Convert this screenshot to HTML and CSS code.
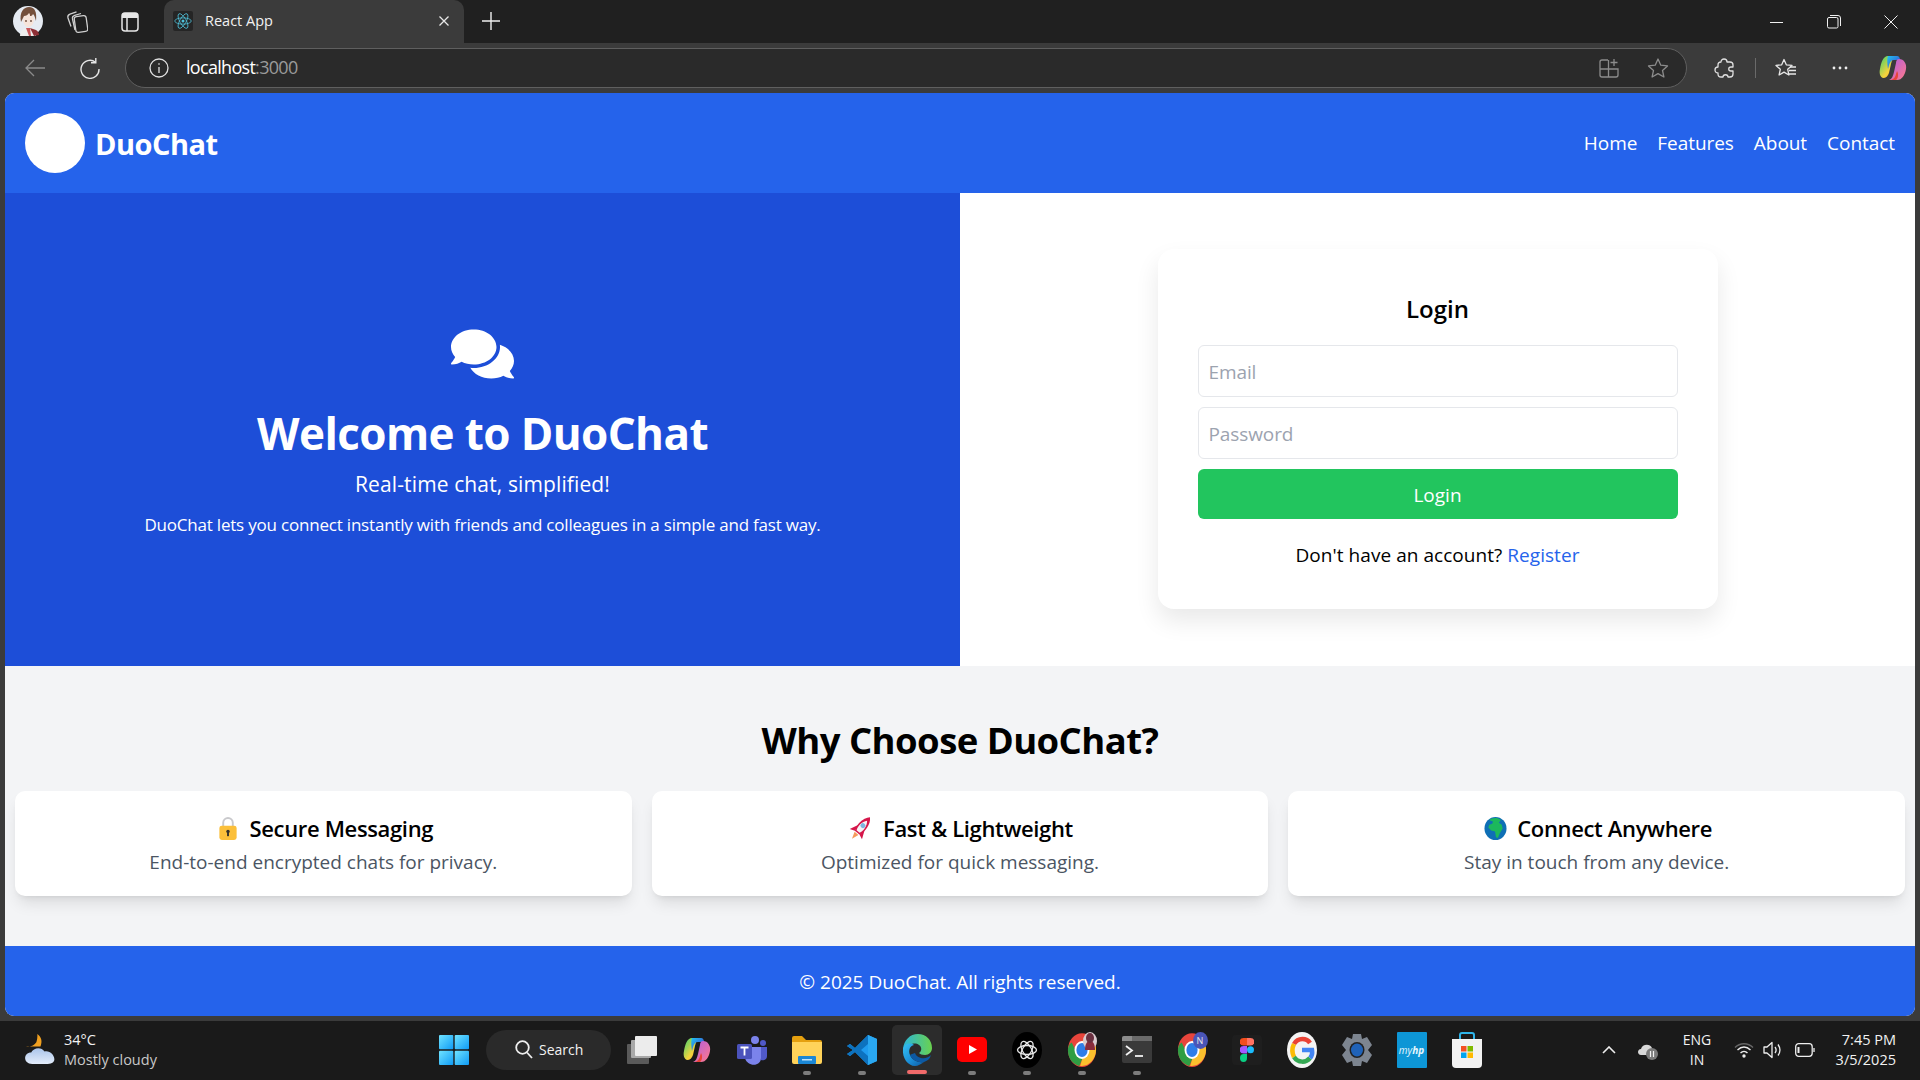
FILE: index.html
```html
<!DOCTYPE html>
<html>
	<head>
		<meta charset="utf-8" />
		<title>React App</title>
		<link rel="stylesheet" href="styles.css">
	</head>
	<body>
		<svg class="defs" width="0" height="0">
			<defs>
				<linearGradient id="copA" x1="0" y1="0" x2="1" y2="1"><stop offset="0" stop-color="#1fc4f0"/><stop offset=".5" stop-color="#2f7de0"/><stop offset="1" stop-color="#2a4fc0"/></linearGradient>
				<linearGradient id="copB" x1="0" y1="0" x2="1" y2="1"><stop offset="0" stop-color="#b05ce0"/><stop offset="1" stop-color="#ff7a8a"/></linearGradient>
				<linearGradient id="copC" x1="0" y1="0" x2="1" y2="1"><stop offset="0" stop-color="#3cd070"/><stop offset=".6" stop-color="#f5d33c"/><stop offset="1" stop-color="#f59a30"/></linearGradient>
				<linearGradient id="winG" x1="0" y1="0" x2="1" y2="1"><stop offset="0" stop-color="#6fe3ff"/><stop offset="1" stop-color="#0f9bf5"/></linearGradient>
				<linearGradient id="edgeG" x1="0" y1="0" x2="1" y2="1"><stop offset="0" stop-color="#35c1f1"/><stop offset=".55" stop-color="#1b8fd8"/><stop offset="1" stop-color="#0c59a4"/></linearGradient>
				<linearGradient id="edgeH" x1="0" y1="0" x2="1" y2="0"><stop offset="0" stop-color="#2bb5d8"/><stop offset="1" stop-color="#6ad24e"/></linearGradient>
				<linearGradient id="cloudG" x1="0" y1="0" x2="0" y2="1"><stop offset="0" stop-color="#aac4ea"/><stop offset="1" stop-color="#e3ecfa"/></linearGradient>
				<symbol id="copilot" viewBox="0 0 28 26">
					<path d="M9 1h8c-3 1-4 4-5 8l-2 9c-1 3-3 5-6 5-3-1-4-5-3-9 1-6 3-13 8-13z" fill="url(#copC)"/>
					<path d="M9 1h9c2 0 3 2 3 4h-6c-3 0-4 2-5 5l-1 4c-1-6-1-11 0-13z" fill="url(#copA)"/>
					<path d="M20 4c5 0 8 5 7 10-1 6-4 11-9 11h-8c3-1 4-4 5-8l2-9c0-2 1-4 3-4z" fill="url(#copB)"/>
					<path d="M10 25c4 0 6-2 7-6l1-3c2 3 1 8-1 9z" fill="#e8443a"/>
				</symbol>
				<symbol id="chrome" viewBox="0 0 32 36">
					<ellipse cx="16" cy="18" rx="15" ry="18" fill="#e8453c"/>
					<path d="M1 18c0 9 5 15 12 17l6-13-10-4-4-8c-3 2-4 5-4 8z" fill="#2f9e44"/>
					<path d="M31 18c0-4-1-7-3-10H16l4 7-6 20h2c8 0 15-8 15-17z" fill="#fbc02d"/>
					<ellipse cx="16" cy="18" rx="8" ry="9.5" fill="#fff"/>
					<ellipse cx="16" cy="18" rx="6" ry="7.5" fill="#2f7de8"/>
				</symbol>
			</defs>
		</svg>

		<div class="tabbar">
			<span class="avatar">
				<svg width="30" height="30" viewBox="0 0 30 30"><circle cx="15" cy="15" r="15" fill="#e6ebf2"/><path d="M7 30c0-5 3-8 8-8s8 3 8 8z" fill="#eeeeee"/><path d="M17 22l6 2c2 1 3 3 3 5l-5 1z" fill="#8e2f35"/><path d="M13 22l3 8h2l-1-8z" fill="#c8565a"/><ellipse cx="15.500" cy="13.500" rx="5.500" ry="7.500" fill="#f6e4da"/><path d="M8 16C6 6 11 1 16 1c6 0 8 5 7 14-1-3-1-5-3-7-1 2-2 2-3 2 0-1 0-2-1-3-1 2-3 3-5 3-1 2-2 4-3 6z" fill="#74503c"/><circle cx="13" cy="15" r=".9" fill="#6a4a3a"/><circle cx="18" cy="15" r=".9" fill="#6a4a3a"/></svg>
			</span>
			<svg class="tb-icon collections" width="22" height="24" viewBox="0 0 22 24" fill="none" stroke="#d0d0d0" stroke-width="1.300"><rect x="9" y="6" width="12" height="16" rx="2.500" transform="rotate(-8 15 14)"/><path d="M9 20L6.500 9c-.4-2 .5-3.200 2.200-3.700L15 3.500"/><path d="M5 16.500L2 8c-.6-2 .3-3.200 2-3.800l6.500-2.400"/></svg>
			<svg class="tb-icon tablist" width="18" height="20" viewBox="0 0 18 20" fill="none"><rect x="1" y="1" width="16" height="18" rx="3" stroke="#e6e6e6" stroke-width="1.500"/><path d="M1 3a2 2 0 0 1 2-2h12a2 2 0 0 1 2 2v3H1z" fill="#e6e6e6"/><path d="M6 6v13" stroke="#e6e6e6" stroke-width="1.500"/></svg>
			<div class="tab">
				<span class="favicon">
					<svg width="18" height="18" viewBox="-12 -12 24 24" fill="none" stroke="#4fc3dc" stroke-width="1"><circle r="2" fill="#4fc3dc" stroke="none"/><ellipse rx="11" ry="4.200"/><ellipse rx="11" ry="4.200" transform="rotate(60)"/><ellipse rx="11" ry="4.200" transform="rotate(120)"/></svg>
				</span>
				<span class="tab-title">React App</span>
				<svg class="tab-close" width="12" height="12" viewBox="0 0 12 12" stroke="#e8e8e8" stroke-width="1.300"><path d="M1.500 1.500l9 9M10.500 1.500l-9 9"/></svg>
			</div>
			<svg class="new-tab" width="18" height="18" viewBox="0 0 18 18" stroke="#f0f0f0" stroke-width="1.400"><path d="M9 0v18M0 9h18"/></svg>
			<div class="win-btns">
				<svg width="14" height="14" viewBox="0 0 14 14" stroke="#f0f0f0" stroke-width="1"><path d="M0 7.500h13"/></svg>
				<svg width="14" height="14" viewBox="0 0 14 14" fill="none" stroke="#f0f0f0" stroke-width="1"><rect x=".5" y="2.500" width="10.500" height="10.500" rx="1.500"/><path d="M3 .5h8a2.500 2.500 0 0 1 2.500 2.500v8"/></svg>
				<svg width="14" height="14" viewBox="0 0 14 14" stroke="#f0f0f0" stroke-width="1"><path d="M.5.5l13 13M13.500.5l-13 13"/></svg>
			</div>
		</div>

		<div class="toolbar">
			<svg class="back" width="20" height="18" viewBox="0 0 20 18" fill="none" stroke="#8a8a8a" stroke-width="1.300"><path d="M20 9H1M9 1L1 9l8 8"/></svg>
			<svg class="reload" width="20" height="21" viewBox="0 0 20 21" fill="none" stroke="#e6e6e6" stroke-width="1.400"><path d="M15.500 4.200A9 9 0 1 0 19 11"/><path d="M15.800 0v4.800H11"/></svg>
			<div class="address">
				<svg width="20" height="20" viewBox="0 0 20 20" fill="none" stroke="#e0e0e0" stroke-width="1.300"><circle cx="10" cy="10" r="9"/><path d="M10 9v6M10 5.200v1.500"/></svg>
				<span class="url">localhost<span class="url-port">:3000</span></span>
				<span class="grow"></span>
				<svg class="addr-split" width="20" height="20" viewBox="0 0 20 20" fill="none" stroke="#8c8c8c" stroke-width="1.300"><path d="M9 2H3a2 2 0 0 0-2 2v13a2 2 0 0 0 2 2h14a2 2 0 0 0 2-2v-6H1M9.500 2v17M15 1v7M11.500 4.500h7"/></svg>
				<svg class="addr-star" width="22" height="20" viewBox="0 0 22 20" fill="none" stroke="#8c8c8c" stroke-width="1.300"><path d="M11 1l2.800 6.200 6.700.7-5 4.500 1.400 6.600L11 15.600 5.100 19l1.400-6.600-5-4.500 6.700-.7z" stroke-linejoin="round"/></svg>
			</div>
			<div class="tool-right">
				<svg class="t-ext" width="20" height="20" viewBox="0 0 20 20" fill="none" stroke="#e0e0e0" stroke-width="1.300"><path d="M7 4c0-4 6-4 6 0h3c2 0 3 1 3 3v2h-2c-3 0-3 4 0 4h2v3c0 2-1 3-3 3h-2c0-3-5-3-5 0H7c-2 0-3-1-3-3v-1c-4 0-4-6 0-6V7c0-2 1-3 3-3z" stroke-linejoin="round"/></svg>
				<span class="t-div"></span>
				<svg class="t-fav" width="22" height="20" viewBox="0 0 22 20" fill="none" stroke="#e6e6e6" stroke-width="1.300"><path d="M9 1.500l2.300 5.300 5.700.6-4.300 3.900 1.200 5.700L9 14.100 4.100 17l1.200-5.700L1 7.400l5.700-.6z" stroke-linejoin="round"/><path d="M15 9h6M14 12.500h7M13 16h8"/></svg>
				<svg class="t-more" width="16" height="4" viewBox="0 0 16 4" fill="#eee"><circle cx="2" cy="2" r="1.400"/><circle cx="8" cy="2" r="1.400"/><circle cx="14" cy="2" r="1.400"/></svg>
				<svg class="t-cop" width="28" height="26"><use href="#copilot"/></svg>
			</div>
		</div>

		<div class="page">
			<header class="site-head">
				<div class="brand">
					<span class="brand-logo"></span>
					<span class="brand-name">DuoChat</span>
				</div>
				<nav class="site-nav">
					<a>Home</a>
					<a>Features</a>
					<a>About</a>
					<a>Contact</a>
				</nav>
			</header>

			<section class="hero">
				<div class="hero-left">
					<svg class="hero-icon" width="63" height="56" viewBox="0 0 576 512" fill="#fff"><path d="M416 192c0-88.400-93.100-160-208-160S0 103.600 0 192c0 34.300 14.100 65.900 38 92-13.400 30.200-35.500 54.200-35.800 54.500-2.200 2.300-2.800 5.700-1.500 8.700S4.800 352 8 352c36.600 0 66.900-12.300 88.700-25 32.200 15.700 70.300 25 111.300 25 114.900 0 208-71.600 208-160zm122 220c23.900-26 38-57.700 38-92 0-66.900-53.500-124.200-129.300-148.100.9 6.600 1.300 13.300 1.300 20.100 0 105.900-107.700 192-240 192-10.800 0-21.300-.8-31.700-1.900C207.800 439.600 281.800 480 368 480c41 0 79.100-9.200 111.300-25 21.800 12.700 52.100 25 88.700 25 3.200 0 6.100-1.900 7.300-4.800 1.300-2.900.7-6.300-1.500-8.700-.3-.3-22.400-24.200-35.800-54.500z"/></svg>
					<h1 class="hero-title">Welcome to DuoChat</h1>
					<p class="hero-sub">Real-time chat, simplified!</p>
					<p class="hero-text">DuoChat lets you connect instantly with friends and colleagues in a simple and fast way.</p>
				</div>
				<div class="hero-right">
					<form class="login-card">
						<h2 class="login-title">Login</h2>
						<input class="login-input" type="text" placeholder="Email">
						<input class="login-input" type="password" placeholder="Password">
						<button class="login-btn" type="button">Login</button>
						<p class="login-note">Don't have an account? <a>Register</a></p>
					</form>
				</div>
			</section>

			<section class="features">
				<h2 class="features-title">Why Choose DuoChat?</h2>
				<div class="feature-grid">
					<div class="feature-card">
						<h3 class="feature-name">
							<span class="emoji"><svg width="18" height="23" viewBox="0 0 18 24"><path d="M4 11V6a5 5 0 0 1 10 0v5" fill="none" stroke="#c9c9cc" stroke-width="2"/><rect x="0" y="9" width="18" height="15" rx="2.500" fill="#fbbf3a"/><circle cx="9" cy="15" r="1.800" fill="#33302a"/><rect x="8" y="15" width="2" height="5" fill="#33302a"/></svg></span>
							Secure Messaging
						</h3>
						<p class="feature-text">End-to-end encrypted chats for privacy.</p>
					</div>
					<div class="feature-card">
						<h3 class="feature-name">
							<span class="emoji"><svg width="24" height="24" viewBox="0 0 24 24"><g transform="rotate(40 12 12)"><path d="M9.500 19h5L12 26z" fill="#f59a5c"/><path d="M8 11L4 20l5-2zM16 11l4 9-5-2z" fill="#d5164a"/><path d="M12-2c5.500 5 5.500 15 3 20H9C6.500 13 6.500 3 12-2z" fill="#d5164a"/><path d="M12 2.500c3.500 4 3.800 10.500 2 14h-4c-1.800-3.500-1.500-10 2-14z" fill="#f7f4f6"/><circle cx="12" cy="9" r="2.500" fill="#7fb4e0"/></g></svg></span>
							Fast &amp; Lightweight
						</h3>
						<p class="feature-text">Optimized for quick messaging.</p>
					</div>
					<div class="feature-card">
						<h3 class="feature-name">
							<span class="emoji"><svg width="23" height="23" viewBox="0 0 23 24"><ellipse cx="11.500" cy="12" rx="11.500" ry="12" fill="#0f6fb5"/><path d="M5 3c3-2 8-3 12 0l-2 3 3 2 1 4-3 5-2 5-2-1-1-6-4-1-3-3 1-3 3-1 1-2z" fill="#1cb85c"/></svg></span>
							Connect Anywhere
						</h3>
						<p class="feature-text">Stay in touch from any device.</p>
					</div>
				</div>
			</section>

			<footer class="site-foot">© 2025 DuoChat. All rights reserved.</footer>
		</div>

		<div class="taskbar">
			<div class="weather">
				<svg width="32" height="31" viewBox="0 0 31 30"><path d="M12 0c4 3 5 7 3 12L1 12c4 1 8-1 10-4 1-3 1-5 1-8z" fill="#f0a020"/><path d="M7 29c-9 0-9-11-1-11 2-5 10-6 13-1 8-2 15 12 3 12z" fill="url(#cloudG)"/></svg>
				<div class="weather-txt">
					<span class="w-temp">34°C</span>
					<span class="w-desc">Mostly cloudy</span>
				</div>
			</div>
			<svg class="start" width="30" height="30" viewBox="0 0 30 30" fill="url(#winG)"><rect width="14.300" height="14.300" rx="1"/><rect x="15.700" width="14.300" height="14.300" rx="1"/><rect y="15.700" width="14.300" height="14.300" rx="1"/><rect x="15.700" y="15.700" width="14.300" height="14.300" rx="1"/></svg>
			<div class="search-pill">
				<svg width="18" height="19" viewBox="0 0 18 19" fill="none" stroke="#eee" stroke-width="1.800"><circle cx="7.500" cy="7.500" r="6.300"/><path d="M12 12.500l5 5.500"/></svg>
				<span>Search</span>
			</div>
			<div class="tiles">
				<div class="tile"><svg width="30" height="28" viewBox="0 0 30 28"><rect y="8" width="22" height="20" rx="1" fill="#5a5a5a"/><rect x="4" y="4" width="20" height="18" rx="1" fill="#a8a8a8"/><rect x="8" y="0" width="22" height="20" rx="1" fill="#ececec"/></svg></div>
				<div class="tile"><svg width="28" height="26"><use href="#copilot"/></svg></div>
				<div class="tile"><svg width="30" height="30" viewBox="0 0 30 30"><circle cx="18" cy="5" r="4" fill="#7b83eb"/><circle cx="26" cy="8" r="3" fill="#5059c9"/><path d="M22 12h8v9c0 4-4 5-6 4z" fill="#5059c9"/><path d="M8 12h16v11c0 9-14 9-16 0z" fill="#7b83eb"/><rect y="9" width="15" height="15" rx="1.500" fill="#4b53bc"/><path d="M3.500 12.500h8M7.500 12.500v8" stroke="#fff" stroke-width="1.800"/></svg></div>
				<div class="tile has-dot"><svg width="30" height="28" viewBox="0 0 30 28"><path d="M0 2a2 2 0 0 1 2-2h8l4 4h14a2 2 0 0 1 2 2v4H0z" fill="#e5a00f"/><path d="M0 6h30v20a2 2 0 0 1-2 2H2a2 2 0 0 1-2-2z" fill="#ffd35a"/><rect x="6" y="20" width="18" height="8" rx="1" fill="#1b87d5"/><rect x="10" y="23" width="10" height="1.500" fill="#bfe2fb"/></svg></div>
				<div class="tile has-dot"><svg width="30" height="30" viewBox="0 0 30 30"><path d="M21 0l9 4v22l-9 4-13-13-5 4-3-2 6-4-6-4 3-2 5 4z" fill="#1f9cf0"/><path d="M21 0v9l-7 6 7 6v9l-13-13-5 4-3-2 6-4-6-4 3-2 5 4z" fill="#0d72bf"/><path d="M21 0l9 4v22l-9 4z" fill="#2aa8f2"/></svg></div>
				<div class="tile is-active has-bar"><svg width="30" height="32" viewBox="0 0 30 32"><path d="M1 15C2 6 8 0 16 0c8 0 14 6 14 14 0 4-3 7-7 7-3 0-5-1-6-2 3-2 3-6 0-8-4-3-10-1-11 4z" fill="url(#edgeH)"/><path d="M1 15c1-5 7-7 11-4-4 1-6 5-4 10 2 5 8 8 14 7-3 2-6 4-9 4-7 0-13-8-12-17z" fill="url(#edgeG)"/><path d="M8 21c2 5 8 8 14 7 3-1 6-3 7-7-2 2-6 4-10 3-3-1-5-2-6-5-2 1-4 1-5 2z" fill="#0c59a4"/></svg></div>
				<div class="tile has-dot"><svg width="30" height="25" viewBox="0 0 30 25"><rect width="30" height="25" rx="5" fill="#f00"/><path d="M12 8l8 4.500-8 4.500z" fill="#fff"/></svg></div>
				<div class="tile has-dot"><svg width="30" height="36" viewBox="0 0 30 36"><ellipse cx="15" cy="18" rx="15" ry="18" fill="#000"/><g fill="none" stroke="#e8e8e8" stroke-width="1.300"><ellipse cx="15" cy="18" rx="9.500" ry="4.500"/><ellipse cx="15" cy="18" rx="9.500" ry="4.500" transform="rotate(60 15 18)"/><ellipse cx="15" cy="18" rx="9.500" ry="4.500" transform="rotate(120 15 18)"/></g></svg></div>
				<div class="tile has-dot"><span class="tile-stack"><svg width="30" height="36"><use href="#chrome"/></svg><svg class="tile-over" width="14" height="18" viewBox="0 0 14 18"><ellipse cx="7" cy="9" rx="7" ry="9" fill="#d9ccd0"/><path d="M2 18c0-6 2-9 5-9s5 3 5 9z" fill="#8a2c3c"/><ellipse cx="7" cy="6" rx="4" ry="5" fill="#6a3040"/></svg></span></div>
				<div class="tile has-dot"><svg width="30" height="27" viewBox="0 0 30 27"><rect width="30" height="27" rx="2" fill="#3a3a3a"/><path d="M0 2a2 2 0 0 1 2-2h26a2 2 0 0 1 2 2v3H0z" fill="#8c8c8c"/><rect x="10" width="20" height="5" fill="#6a6a6a"/><path d="M4 10l6 4.500-6 4.500" fill="none" stroke="#f2f2f2" stroke-width="1.800"/><path d="M13 20h8" stroke="#f2f2f2" stroke-width="1.800"/></svg></div>
				<div class="tile"><span class="tile-stack"><svg width="30" height="36"><use href="#chrome"/></svg><span class="tile-n">N</span></span></div>
				<div class="tile"><span class="figma-box"><svg width="14" height="24" viewBox="0 0 14 24"><path d="M7 0H3.500a3.500 3.500 0 0 0 0 7.500H7z" fill="#f24e1e"/><path d="M7 0h3.500a3.500 3.500 0 0 1 0 7.500H7z" fill="#ff7262"/><path d="M7 8H3.500a3.500 3.500 0 0 0 0 7.500H7z" fill="#a259ff"/><circle cx="10.500" cy="11.750" r="3.500" fill="#1abcfe"/><path d="M3.500 16H7v4a3.500 4 0 1 1-3.500-4z" fill="#0acf83"/></svg></span></div>
				<div class="tile"><svg width="30" height="36" viewBox="0 0 30 36"><ellipse cx="15" cy="18" rx="15" ry="18" fill="#f4f4f4"/><g fill="none" stroke-width="4.500"><path d="M23 11C20 6 11 5 7 12" stroke="#ea4335"/><path d="M7 12c-2 4-2 9 0 13" stroke="#fbbc05"/><path d="M7 25c4 6 12 6 16 1" stroke="#34a853"/><path d="M23 26c2-2 2.500-5 2-8H15" stroke="#4285f4"/></g></svg></div>
				<div class="tile"><svg width="30" height="32" viewBox="0 0 30 32"><path d="M11 0h8l1 5 5-2 5 8-4 5 4 5-5 8-5-2-1 5h-8l-1-5-5 2-5-8 4-5-4-5 5-8 5 2z" fill="#7d8590"/><ellipse cx="15" cy="16" rx="7.500" ry="8" fill="#222"/><ellipse cx="15" cy="16" rx="6" ry="6.500" fill="#1f62b8"/></svg></div>
				<div class="tile"><span class="myhp">my<b>hp</b></span></div>
				<div class="tile"><svg width="30" height="36" viewBox="0 0 30 36"><path d="M8 7V3a2 2 0 0 1 2-2h10a2 2 0 0 1 2 2v4" fill="none" stroke="#2fb5ea" stroke-width="2"/><path d="M0 7h30v25a4 4 0 0 1-4 4H4a4 4 0 0 1-4-4z" fill="#f2f2f2"/><rect x="9" y="14" width="5.500" height="5.500" fill="#f25022"/><rect x="15.500" y="14" width="5.500" height="5.500" fill="#7fba00"/><rect x="9" y="20.500" width="5.500" height="5.500" fill="#00a4ef"/><rect x="15.500" y="20.500" width="5.500" height="5.500" fill="#ffb900"/></svg></div>
			</div>
			<div class="tray">
				<svg class="tray-up" width="14" height="8" viewBox="0 0 14 8" fill="none" stroke="#eee" stroke-width="1.600"><path d="M1 7l6-6 6 6"/></svg>
				<svg class="tray-cloud" width="20" height="20" viewBox="0 0 20 20"><path d="M3 15c-4 0-4-6 0-6 1-5 9-6 11-1 1 3 0 6-2 7z" fill="#d8d8d8"/><circle cx="14" cy="14" r="6" fill="#7a7a7a"/><path d="M12.500 11v6M15.500 11v6" stroke="#f0f0f0" stroke-width="1.200"/></svg>
				<div class="lang"><span>ENG</span><span>IN</span></div>
				<svg class="tray-wifi" width="20" height="16" viewBox="0 0 20 16" fill="none" stroke="#eee" stroke-width="1.400"><path d="M1 5.500c5-5 13-5 18 0" stroke="#666"/><path d="M3.500 8c4-4 9-4 13 0"/><path d="M6.500 11c2-2 5-2 7 0"/><circle cx="10" cy="14" r="1" fill="#eee"/></svg>
				<svg class="tray-vol" width="20" height="18" viewBox="0 0 20 18" fill="none" stroke="#eee" stroke-width="1.300"><path d="M1 6h3l5-4.500v15L4 12H1z" stroke-linejoin="round"/><path d="M12 6c1.500 2 1.500 4 0 6M15 3.500c2.500 3.500 2.500 7.500 0 11"/></svg>
				<svg class="tray-bat" width="20" height="14" viewBox="0 0 20 14" fill="none" stroke="#eee" stroke-width="1.300"><rect x=".7" y=".7" width="16.500" height="12.600" rx="3"/><path d="M19 5v4"/><path d="M3.500 4v6" stroke-width="2"/></svg>
				<div class="clock"><span>7:45 PM</span><span>3/5/2025</span></div>
			</div>
		</div>
	</body>
</html>
```

FILE: styles.css
```css
*{margin: 0;padding: 0;box-sizing: border-box;}
html,body{height: 100%;}
body
{
	width: 1920px;
	height: 1080px;
	overflow: hidden;
	display: flex;
	flex-direction: column;
	background: #3b3b3b;
	font-family: "Open Sans", "Noto Sans", sans-serif;
}
.defs{display: block;height: 0;}
.grow{flex: 1;}

/* browser tabs */
.tabbar
{
	height: 43px;
	flex: none;
	display: flex;
	align-items: center;
	background: #202020;
	padding-left: 13px;
}
.avatar{width: 30px;height: 30px;display: block;margin-top: -1px;}
.avatar svg{display: block;}
.collections{margin-left: 23px;}
.tablist{margin-left: 33px;}
.tab
{
	width: 300px;
	height: 43px;
	margin-left: 25px;
	padding: 0 14px 2px 9px;
	display: flex;
	align-items: center;
	background: #3b3b3b;
	border-radius: 10px 10px 0 0;
}
.favicon
{
	width: 20px;
	height: 20px;
	display: flex;
	align-items: center;
	justify-content: center;
	background: #252525;
	border-radius: 2px;
}
.tab-title{margin-left: 12px;flex: 1;font-size: 14.5px;color: #f2f2f2;}
.new-tab{margin-left: 18px;margin-top: -1px;}
.win-btns{margin-left: auto;display: flex;gap: 43px;padding-right: 22px;}

/* browser toolbar */
.toolbar
{
	height: 50px;
	flex: none;
	display: flex;
	align-items: center;
	padding-left: 25px;
	background: #3b3b3b;
}
.reload{margin-left: 35px;}
.address
{
	width: 1562px;
	height: 40px;
	margin-left: 25px;
	padding: 0 17px 0 23px;
	display: flex;
	align-items: center;
	background: #2a2a2a;
	border: 1.5px solid #5f5f5f;
	border-radius: 20px;
}
.url{margin-left: 17px;font-size: 18px;color: #fff;letter-spacing: -.7px;margin-top: -2px;}
.url-port{color: #9a9a9a;}
.addr-star{margin-left: 28px;}
.tool-right{display: flex;align-items: center;}
.t-ext{margin-left: 27px;}
.t-div{width: 1px;height: 20px;margin-left: 21px;background: #6a6a6a;}
.t-fav{margin-left: 19px;}
.t-more{margin-left: 35px;}
.t-cop{margin-left: 31px;}

/* page */
.page
{
	width: 1910px;
	height: 923px;
	flex: none;
	margin-left: 5px;
	display: flex;
	flex-direction: column;
	background: #fff;
	border-radius: 9px;
	overflow: hidden;
}
.site-head
{
	height: 100px;
	flex: none;
	display: flex;
	align-items: center;
	justify-content: space-between;
	padding: 0 20px;
	background: #2563eb;
	color: #fff;
}
.brand{display: flex;align-items: center;gap: 10px;}
.brand-logo{width: 60px;height: 60px;border-radius: 50%;background: #fff;}
.brand-name{font-size: 29px;font-weight: 700;letter-spacing: -.5px;}
.site-nav{display: flex;gap: 20px;font-size: 19px;letter-spacing: -.05px;}

.hero{height: 473px;flex: none;display: flex;}
.hero-left
{
	width: 955px;
	padding-top: 133px;
	display: flex;
	flex-direction: column;
	align-items: center;
	background: #1d4ed8;
	color: #fff;
}
.hero-icon{display: block;}
.hero-title{margin-top: 21px;font-size: 44px;line-height: 60px;font-weight: 700;letter-spacing: -.6px;}
.hero-sub{margin-top: 5px;font-size: 21px;line-height: 32px;letter-spacing: .12px;}
.hero-text{margin-top: 13px;font-size: 17px;line-height: 24px;letter-spacing: -.2px;}

.hero-right
{
	width: 955px;
	padding-bottom: 1px;
	display: flex;
	justify-content: center;
	align-items: center;
}
.login-card
{
	width: 560px;
	height: 360px;
	padding: 48px 40px 0;
	background: #fff;
	border-radius: 16px;
	box-shadow: 0 12px 24px rgba(0,0,0,.09);
}
.login-title{height: 32px;margin-bottom: 16px;text-align: center;font-size: 24px;line-height: 24px;font-weight: 600;color: #000;}
.login-input
{
	width: 480px;
	height: 52px;
	margin-bottom: 10px;
	padding: 2px 10px 0;
	display: block;
	font: 19px "Open Sans", sans-serif;
	letter-spacing: -.1px;
	background: #fff;
	border: 1.5px solid #e5e7eb;
	border-radius: 6px;
	outline: none;
}
.login-input::placeholder{color: #9ca3af;}
.login-btn
{
	width: 480px;
	height: 50px;
	padding-top: 1px;
	display: block;
	font: 19px "Open Sans", sans-serif;
	color: #fff;
	background: #22c55e;
	border: 0;
	border-radius: 6px;
}
.login-note{margin-top: 22px;text-align: center;font-size: 19px;line-height: 28px;color: #000;letter-spacing: .05px;}
.login-note a{color: #2563eb;}

.features
{
	height: 280px;
	flex: none;
	padding: 48px 10px 0;
	background: #f3f4f6;
}
.features-title{text-align: center;font-size: 36.5px;line-height: 52px;font-weight: 700;color: #000;letter-spacing: -.55px;}
.feature-grid{margin-top: 25px;display: grid;grid-template-columns: repeat(3,1fr);gap: 20px;}
.feature-card
{
	height: 105px;
	padding-top: 21px;
	text-align: center;
	background: #fff;
	border-radius: 10px;
	box-shadow: 0 10px 15px -3px rgba(0,0,0,.1), 0 4px 6px -4px rgba(0,0,0,.1);
}
.feature-name
{
	height: 32px;
	display: flex;
	align-items: center;
	justify-content: center;
	gap: 8px;
	font-size: 22px;
	font-weight: 600;
	color: #000;
	letter-spacing: -.35px;
}
.emoji{width: 28px;flex: none;display: flex;align-items: center;justify-content: center;}
.emoji svg{display: block;overflow: visible;}
.feature-text{margin-top: 4px;font-size: 19px;line-height: 28px;color: #4b5563;}

.site-foot
{
	height: 70px;
	flex: none;
	padding-top: 1px;
	display: flex;
	align-items: center;
	justify-content: center;
	background: #2563eb;
	color: #fff;
	font-size: 19px;
}

/* windows taskbar */
.taskbar
{
	height: 59px;
	flex: none;
	margin-top: 5px;
	display: flex;
	align-items: center;
	padding: 0 0 2px 25px;
	background: #1a1a1a;
	color: #f2f2f2;
}
.weather{width: 400px;flex: none;display: flex;align-items: center;gap: 7px;}
.weather-txt{display: flex;flex-direction: column;font-size: 14.5px;line-height: 20px;}
.w-desc{color: #c8c8c8;}
.start{flex: none;margin-left: 14px;}
.search-pill
{
	width: 125px;
	height: 40px;
	flex: none;
	margin-left: 17px;
	padding-left: 29px;
	display: flex;
	align-items: center;
	gap: 6px;
	background: #2a2a2a;
	border-radius: 20px;
	font-size: 14px;
}
.tiles{display: flex;height: 50px;margin-left: 3px;flex: none;}
.tile
{
	width: 55px;
	height: 50px;
	flex: none;
	position: relative;
	display: flex;
	align-items: center;
	justify-content: center;
}
.tile > svg, .tile-stack > svg{display: block;}
.is-active{background: #2c2c2c;border-radius: 5px;width: 50px;margin: 0 2.500px;}
.has-dot::after
{
	content: "";
	position: absolute;
	left: 50%;
	bottom: 0;
	width: 8px;
	height: 4px;
	margin-left: -4px;
	background: #7c7c7c;
	border-radius: 2px;
}
.has-bar::after
{
	content: "";
	position: absolute;
	left: 50%;
	bottom: 1px;
	width: 20px;
	height: 4px;
	margin-left: -10px;
	background: #f06a6a;
	border-radius: 2px;
}
.tile-stack{position: relative;display: block;}
.tile-over{position: absolute;right: 0;top: 0;}
.tile-n
{
	position: absolute;
	right: -1px;
	top: 0;
	width: 15px;
	height: 17px;
	display: flex;
	align-items: center;
	justify-content: center;
	background: #4a55b8;
	border-radius: 50%;
	font-size: 9px;
	color: #e8e8e8;
}
.figma-box{width: 30px;height: 30px;display: flex;align-items: center;justify-content: center;background: #1e1e1e;border-radius: 4px;}
.myhp
{
	width: 30px;
	height: 36px;
	display: flex;
	align-items: center;
	justify-content: center;
	background: #0d96d6;
	border-radius: 1px;
	font-size: 10px;
	font-style: italic;
	color: #e8f6fd;
}
.tray{flex: 1;display: flex;align-items: center;min-width: 0;padding-right: 24px;}
.tray-up{margin-left: 108px;flex: none;}
.tray-cloud{margin-left: 22px;flex: none;}
.lang
{
	width: 40px;
	margin-left: 19px;
	display: flex;
	flex-direction: column;
	align-items: center;
	font-size: 14px;
	line-height: 20px;
	flex: none;
}
.tray-wifi{margin-left: 17px;flex: none;}
.tray-vol{margin-left: 9px;flex: none;}
.tray-bat{margin-left: 12px;flex: none;}
.clock
{
	margin-left: auto;
	display: flex;
	flex-direction: column;
	align-items: flex-end;
	font-size: 14.5px;
	line-height: 20px;
}
```
